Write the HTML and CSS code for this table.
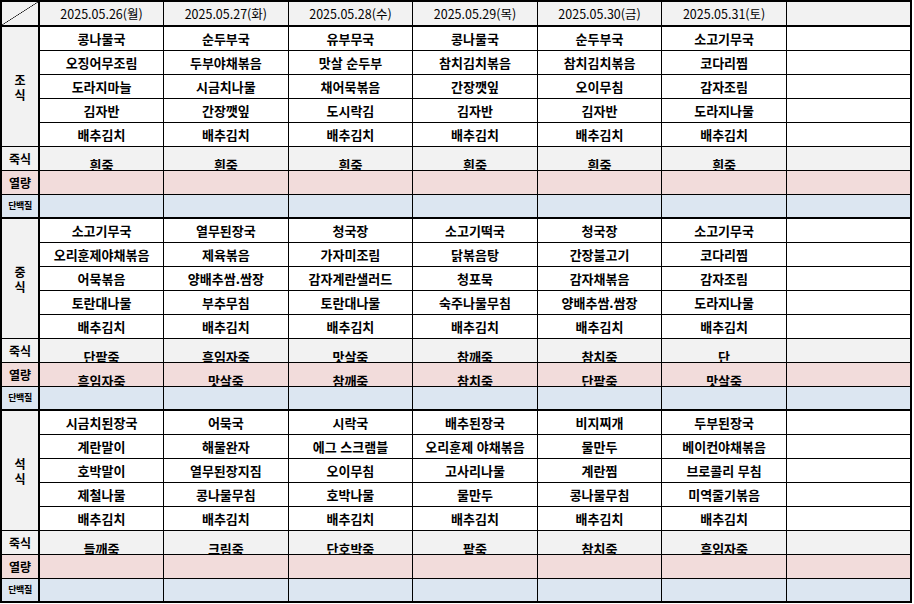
FILE: index.html
```html
<!DOCTYPE html>
<html lang="ko">
<head>
<meta charset="utf-8">
<title>주간 식단표</title>
<link rel="stylesheet" href="styles.css">
</head>
<body>
<table class="menu">
  <colgroup>
    <col class="c-label">
    <col class="c-day"><col class="c-day"><col class="c-day"><col class="c-day"><col class="c-day"><col class="c-day"><col class="c-day">
  </colgroup>
  <thead>
    <tr class="head">
      <th class="corner"></th>
      <th>2025.05.26(월)</th>
      <th>2025.05.27(화)</th>
      <th>2025.05.28(수)</th>
      <th>2025.05.29(목)</th>
      <th>2025.05.30(금)</th>
      <th>2025.05.31(토)</th>
      <th></th>
    </tr>
  </thead>
  <tbody class="sec">
    <tr><th class="meal" rowspan="5"><span>조</span><span>식</span></th><td>콩나물국</td><td>순두부국</td><td>유부무국</td><td>콩나물국</td><td>순두부국</td><td>소고기무국</td><td></td></tr>
    <tr><td>오징어무조림</td><td>두부야채볶음</td><td>맛살 순두부</td><td>참치김치볶음</td><td>참치김치볶음</td><td>코다리찜</td><td></td></tr>
    <tr><td>도라지마늘</td><td>시금치나물</td><td>채어묵볶음</td><td>간장깻잎</td><td>오이무침</td><td>감자조림</td><td></td></tr>
    <tr><td>김자반</td><td>간장깻잎</td><td>도시락김</td><td>김자반</td><td>김자반</td><td>도라지나물</td><td></td></tr>
    <tr><td>배추김치</td><td>배추김치</td><td>배추김치</td><td>배추김치</td><td>배추김치</td><td>배추김치</td><td></td></tr>
    <tr class="porridge"><th>죽식</th><td class="low"><span>흰죽</span></td><td class="low"><span>흰죽</span></td><td class="low"><span>흰죽</span></td><td class="low"><span>흰죽</span></td><td class="low"><span>흰죽</span></td><td class="low"><span>흰죽</span></td><td></td></tr>
    <tr class="kcal"><th>열량</th><td></td><td></td><td></td><td></td><td></td><td></td><td></td></tr>
    <tr class="protein"><th class="tiny">단백질</th><td></td><td></td><td></td><td></td><td></td><td></td><td></td></tr>
  </tbody>
  <tbody class="sec">
    <tr><th class="meal" rowspan="5"><span>중</span><span>식</span></th><td>소고기무국</td><td>열무된장국</td><td>청국장</td><td>소고기떡국</td><td>청국장</td><td>소고기무국</td><td></td></tr>
    <tr><td>오리훈제야채볶음</td><td>제육볶음</td><td>가자미조림</td><td>닭볶음탕</td><td>간장불고기</td><td>코다리찜</td><td></td></tr>
    <tr><td>어묵볶음</td><td>양배추쌈.쌈장</td><td>감자계란샐러드</td><td>청포묵</td><td>감자채볶음</td><td>감자조림</td><td></td></tr>
    <tr><td>토란대나물</td><td>부추무침</td><td>토란대나물</td><td>숙주나물무침</td><td>양배추쌈.쌈장</td><td>도라지나물</td><td></td></tr>
    <tr><td>배추김치</td><td>배추김치</td><td>배추김치</td><td>배추김치</td><td>배추김치</td><td>배추김치</td><td></td></tr>
    <tr class="porridge"><th>죽식</th><td class="low"><span>단팥죽</span></td><td class="low"><span>흑임자죽</span></td><td class="low"><span>맛살죽</span></td><td class="low"><span>참깨죽</span></td><td class="low"><span>참치죽</span></td><td class="low"><span>단</span></td><td></td></tr>
    <tr class="kcal"><th>열량</th><td class="low"><span>흑임자죽</span></td><td class="low"><span>맛살죽</span></td><td class="low"><span>참깨죽</span></td><td class="low"><span>참치죽</span></td><td class="low"><span>단팥죽</span></td><td class="low"><span>맛살죽</span></td><td></td></tr>
    <tr class="protein"><th class="tiny">단백질</th><td></td><td></td><td></td><td></td><td></td><td></td><td></td></tr>
  </tbody>
  <tbody class="sec">
    <tr><th class="meal" rowspan="5"><span>석</span><span>식</span></th><td>시금치된장국</td><td>어묵국</td><td>시락국</td><td>배추된장국</td><td>비지찌개</td><td>두부된장국</td><td></td></tr>
    <tr><td>계란말이</td><td>해물완자</td><td>에그 스크램블</td><td>오리훈제 야채볶음</td><td>물만두</td><td>베이컨야채볶음</td><td></td></tr>
    <tr><td>호박말이</td><td>열무된장지짐</td><td>오이무침</td><td>고사리나물</td><td>계란찜</td><td>브로콜리 무침</td><td></td></tr>
    <tr><td>제철나물</td><td>콩나물무침</td><td>호박나물</td><td>물만두</td><td>콩나물무침</td><td>미역줄기볶음</td><td></td></tr>
    <tr><td>배추김치</td><td>배추김치</td><td>배추김치</td><td>배추김치</td><td>배추김치</td><td>배추김치</td><td></td></tr>
    <tr class="porridge"><th>죽식</th><td class="low"><span>들깨죽</span></td><td class="low"><span>크림죽</span></td><td class="low"><span>단호박죽</span></td><td class="low"><span>팥죽</span></td><td class="low"><span>참치죽</span></td><td class="low"><span>흑임자죽</span></td><td></td></tr>
    <tr class="kcal"><th>열량</th><td></td><td></td><td></td><td></td><td></td><td></td><td></td></tr>
    <tr class="protein"><th class="tiny">단백질</th><td></td><td></td><td></td><td></td><td></td><td></td><td></td></tr>
  </tbody>
</table>
</body>
</html>
```

FILE: styles.css
```css
html, body {
  margin: 0;
  padding: 0;
  background: #fff;
}

body {
  font-family: "Noto Sans CJK KR", "Noto Sans", sans-serif;
  color: #000;
}

.menu {
  border-collapse: collapse;
  table-layout: fixed;
  width: 912px;
  border: 2px solid #000;
}

.c-label {
  width: 38px;
}

.menu th,
.menu td {
  border: 1px solid #000;
  padding: 0;
  height: 23px;
  text-align: center;
  vertical-align: middle;
  font-size: 13px;
  font-weight: 700;
  line-height: 14px;
  white-space: nowrap;
  overflow: hidden;
}

.menu .head th {
  height: 23px;
  background: #f2f2f2;
  font-size: 12.5px;
  font-weight: 400;
  border-bottom: 2px solid #000;
}

.menu .head th.corner {
  background-color: #f2f2f2;
  background-image: linear-gradient(to bottom right, transparent calc(50% - 0.6px), #000 50%, transparent calc(50% + 0.6px));
}

.menu th:first-child,
.menu .meal {
  border-right: 2px solid #000;
  font-size: 12px;
}

.menu .meal {
  background: #f2f2f2;
  font-size: 13px;
}

.meal span {
  display: block;
  line-height: 15px;
}

.sec {
  border-bottom: 2px solid #000;
}

.porridge th,
.porridge td {
  background: #f2f2f2;
}

.kcal th,
.kcal td {
  background: #f2dcdb;
}

.menu .protein th,
.menu .protein td {
  height: 22px;
  background: #dce6f1;
}

.menu th.tiny {
  font-size: 9px;
  letter-spacing: -0.5px;
}

.menu td.low {
  vertical-align: bottom;
}

.low span {
  display: block;
  line-height: 13px;
  margin-bottom: -1px;
}
```
